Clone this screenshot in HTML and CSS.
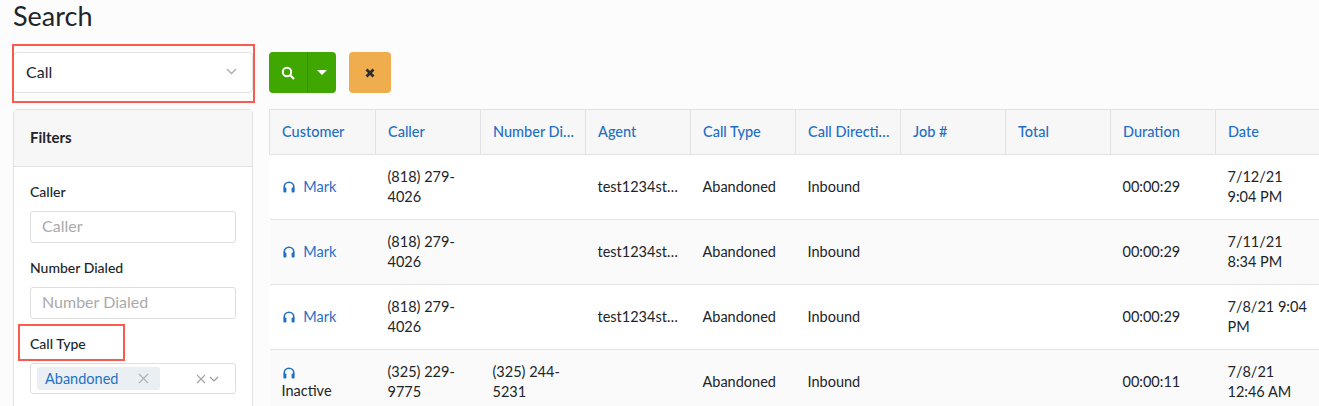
FILE: index.html
```html
<!DOCTYPE html>
<html lang="en">
<head>
  <meta charset="UTF-8">
  <title>Search</title>
  <link rel="stylesheet" href="styles.css">
</head>
<body>
  <svg class="icon-defs" width="0" height="0">
    <symbol id="headset" viewBox="0 0 12 12">
      <path d="M1.2 7.2V6a4.8 4.8 0 0 1 9.6 0v1.2" fill="none" stroke="currentColor" stroke-width="1.6"/>
      <rect x="0.4" y="6.6" width="3" height="4.9" rx="1" fill="currentColor"/>
      <rect x="8.6" y="6.6" width="3" height="4.9" rx="1" fill="currentColor"/>
    </symbol>
  </svg>

  <h1 class="page-title">Search</h1>

  <div class="layout">
    <aside class="sidebar">
      <div class="type-select">
        <span>Call</span>
        <svg class="chevron" width="11" height="7" viewBox="0 0 11 7"><path d="M1 1l4.5 4.5L10 1" fill="none" stroke="#aaa" stroke-width="1.3"/></svg>
        <div class="mark mark-select"></div>
      </div>

      <div class="filters">
        <div class="filters-head">Filters</div>
        <div class="filters-body">
          <label class="field-label">Caller</label>
          <div class="text-input">Caller</div>
          <label class="field-label">Number Dialed</label>
          <div class="text-input">Number Dialed</div>
          <label class="field-label call-type">Call Type<span class="mark mark-label"></span></label>
          <div class="multi-select">
            <span class="tag">Abandoned
              <svg width="11" height="11" viewBox="0 0 11 11"><path d="M1 1l9 9M10 1l-9 9" stroke="#a9b1b8" stroke-width="1.1"/></svg>
            </span>
            <svg class="clear" width="10" height="10" viewBox="0 0 10 10"><path d="M1 1l8 8M9 1l-8 8" stroke="#a5a5a5" stroke-width="1.1"/></svg>
            <svg width="10" height="6" viewBox="0 0 10 6"><path d="M1 1l4 4 4-4" fill="none" stroke="#999" stroke-width="1.2"/></svg>
          </div>
        </div>
      </div>
    </aside>

    <main class="results">
      <div class="actions">
        <div class="search-btn">
          <span class="search-part">
            <svg width="14" height="14" viewBox="0 0 14 14"><circle cx="6" cy="6" r="4.2" fill="none" stroke="#fff" stroke-width="2"/><path d="M9 9l4 4" stroke="#fff" stroke-width="2.2"/></svg>
          </span>
          <span class="caret-part"><i class="caret"></i></span>
        </div>
        <div class="clear-btn">
          <svg width="10" height="10" viewBox="0 0 10 10"><path d="M1.5 1.5l7 7M8.5 1.5l-7 7" stroke="#2b2b2b" stroke-width="2.8"/></svg>
        </div>
      </div>

      <table class="grid">
        <colgroup>
          <col class="col-first">
          <col class="col"><col class="col"><col class="col"><col class="col">
          <col class="col"><col class="col"><col class="col"><col class="col"><col class="col">
        </colgroup>
        <thead>
          <tr>
            <th>Customer</th><th>Caller</th><th>Number Dialed</th><th>Agent</th><th>Call Type</th>
            <th>Call Direction</th><th>Job #</th><th>Total</th><th>Duration</th><th>Date</th>
          </tr>
        </thead>
        <tbody>
          <tr>
            <td><svg class="headset"><use href="#headset"/></svg> <a>Mark</a></td>
            <td>(818) 279-4026</td><td></td><td class="clip">test1234student</td><td>Abandoned</td>
            <td>Inbound</td><td></td><td></td><td>00:00:29</td><td>7/12/21 9:04 PM</td>
          </tr>
          <tr>
            <td><svg class="headset"><use href="#headset"/></svg> <a>Mark</a></td>
            <td>(818) 279-4026</td><td></td><td class="clip">test1234student</td><td>Abandoned</td>
            <td>Inbound</td><td></td><td></td><td>00:00:29</td><td>7/11/21 8:34 PM</td>
          </tr>
          <tr>
            <td><svg class="headset"><use href="#headset"/></svg> <a>Mark</a></td>
            <td>(818) 279-4026</td><td></td><td class="clip">test1234student</td><td>Abandoned</td>
            <td>Inbound</td><td></td><td></td><td>00:00:29</td><td>7/8/21 9:04 PM</td>
          </tr>
          <tr>
            <td><svg class="headset solo"><use href="#headset"/></svg> Inactive</td>
            <td>(325) 229-9775</td><td>(325) 244-5231</td><td></td><td>Abandoned</td>
            <td>Inbound</td><td></td><td></td><td>00:00:11</td><td>7/8/21 12:46 AM</td>
          </tr>
        </tbody>
      </table>
    </main>
  </div>
</body>
</html>
```

FILE: styles.css
```css
html, body {
  height: 406px;
  overflow: hidden;
}
body {
  margin: 0;
  padding-left: 13px;
  background-color: #fcfcfc;
  color: #212529;
  font-family: Lato, "Open Sans", sans-serif;
  font-size: 14.5px;
}
.icon-defs {
  position: absolute;
}
.page-title {
  margin: 0;
  height: 52px;
  font-size: 27px;
  font-weight: 400;
  line-height: 31px;
}
.layout {
  display: flex;
  gap: 16px;
}
.sidebar {
  width: 240px;
  flex-shrink: 0;
}
.type-select {
  position: relative;
  display: flex;
  justify-content: space-between;
  align-items: center;
  height: 41px;
  padding: 0 15px 2px 12px;
  box-sizing: border-box;
  margin-bottom: 16px;
  background-color: #fff;
  border: 1px solid #e2e2e2;
  border-radius: 4px;
  font-size: 16px;
}
.chevron {
  margin-top: -1px;
}
.mark {
  position: absolute;
  border: 2px solid #fb5a4e;
  box-sizing: border-box;
}
.mark-select {
  left: -2px;
  top: -9px;
  width: 243px;
  height: 59px;
}
.filters {
  background-color: #fff;
  border: 1px solid #e2e2e2;
  border-radius: 4px 4px 0 0;
}
.filters-head {
  height: 56px;
  padding-left: 16px;
  line-height: 54px;
  background-color: #f7f7f7;
  border-bottom: 1px solid #e2e2e2;
  font-weight: 700;
  font-size: 15px;
}
.filters-body {
  padding: 15px 16px;
}
.field-label {
  display: block;
  height: 20px;
  margin-bottom: 9px;
  font-size: 14px;
  font-weight: 500;
  line-height: 20px;
}
.call-type {
  position: relative;
}
.mark-label {
  left: -12px;
  top: -10px;
  width: 107px;
  height: 37px;
}
.text-input {
  height: 32px;
  box-sizing: border-box;
  padding-left: 11px;
  margin-bottom: 15px;
  border: 1px solid #dedede;
  border-radius: 3px;
  color: #aaa;
  font-size: 16px;
  line-height: 27px;
}
.multi-select {
  display: flex;
  align-items: center;
  gap: 3px;
  height: 31px;
  box-sizing: border-box;
  padding: 0 16px 0 6px;
  border: 1px solid #dedede;
  border-radius: 3px;
}
.tag {
  display: flex;
  align-items: center;
  justify-content: space-between;
  width: 123px;
  height: 23px;
  padding: 0 11px 0 8px;
  box-sizing: border-box;
  margin-right: auto;
  background-color: #e9eff3;
  border-radius: 3px;
  color: #1f6fc5;
}
.results {
  flex: 1;
  min-width: 0;
}
.actions {
  display: flex;
  gap: 13px;
  height: 41px;
  margin-bottom: 16px;
}
.search-btn {
  display: flex;
  width: 67px;
  background-color: #40a600;
  border-radius: 4px;
}
.search-part {
  display: flex;
  align-items: center;
  justify-content: center;
  width: 38px;
  border-right: 1px solid #389200;
}
.caret-part {
  display: flex;
  align-items: center;
  justify-content: center;
  flex: 1;
}
.caret {
  width: 0;
  height: 0;
  border: 5px solid transparent;
  border-top: 5px solid #fff;
  border-bottom: 0;
}
.clear-btn {
  display: flex;
  align-items: center;
  justify-content: center;
  width: 42px;
  background-color: #f0ad4e;
  border-radius: 4px;
}
.grid {
  width: 1051px;
  table-layout: fixed;
  border-collapse: collapse;
  background-color: #fff;
}
.col-first {
  width: 106px;
}
.col {
  width: 105px;
}
.grid th, .grid td {
  padding: 0 12px;
  text-align: left;
  border: 1px solid #e2e2e2;
}
.grid th {
  height: 42px;
  padding: 0 9px 2px 12px;
  overflow: hidden;
  background-color: #f7f7f7;
  color: #1f6fc5;
  font-weight: 500;
  white-space: nowrap;
  text-overflow: ellipsis;
}
.grid td {
  height: 64px;
  line-height: 20px;
  border-width: 0 0 1px 0;
}
.grid tbody tr:nth-child(even) {
  background-color: #fafafa;
}
.grid a {
  margin-left: 5px;
  color: #1f6fc5;
}
.clip {
  overflow: hidden;
  white-space: nowrap;
  text-overflow: ellipsis;
}
.headset {
  width: 12px;
  height: 12px;
  margin-left: 1px;
  color: #1f6fc5;
  vertical-align: -1px;
}
.solo {
  display: block;
  margin-top: 4px;
  margin-bottom: 2px;
}
```
